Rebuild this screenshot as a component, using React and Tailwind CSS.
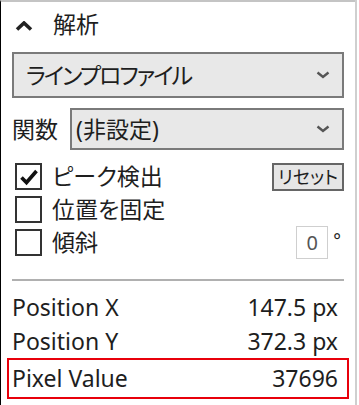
import React from "react";

function Chevron({ className }) {
  return (
    <svg width="14" height="8" viewBox="0 0 14 8" className={className}>
      <polyline points="1.5,1.5 7,6 12.5,1.5" fill="none" stroke="#555" strokeWidth="2.4" />
    </svg>
  );
}

function CheckRow({ checked, label, children }) {
  return (
    <div className="flex items-center h-[33px]">
      <span className="ml-[3px] w-[27px] h-[27px] border-2 border-[#333] bg-white flex items-center justify-center">
        {checked && (
          <svg width="20" height="18" viewBox="0 0 20 18">
            <polyline points="2.5,9.5 7.5,14.5 17.5,3" fill="none" stroke="#111" strokeWidth="3.6" />
          </svg>
        )}
      </span>
      <span className="ml-[10px] flex-1 leading-none">{label}</span>
      {children}
    </div>
  );
}

export default function App() {
  const rows = [
    { label: "Position X", value: "147.5 px", h: "h-[35px]" },
    { label: "Position Y", value: "372.3 px", h: "h-[33px]" },
  ];

  return (
    <div className="w-[359px] h-[405px] bg-white overflow-hidden flex text-[23px] text-[#1e1e1e] font-['Noto_Sans','Noto_Sans_CJK_JP',sans-serif] [font-feature-settings:'palt']">
      <div className="flex-1 border-t-2 border-[#c4c4c4] border-l border-l-black flex flex-col">
        {/* header */}
        <div className="h-[50px] flex items-center pl-[14px] pb-[5px]">
          <svg width="18" height="10" viewBox="0 0 18 10" className="mt-[2px]">
            <polyline points="2,8.5 9,2 16,8.5" fill="none" stroke="#222" strokeWidth="3.6" />
          </svg>
          <span className="ml-[20px] leading-none">解析</span>
        </div>

        <div className="px-[11px] flex flex-col">
          <div className="h-[46px] border-2 border-[#7a7a7a] bg-[#e8e8e8] flex items-center pl-[12px] pr-[12px]">
            <span className="flex-1 leading-none tracking-[-2px]">ラインプロファイル</span>
            <Chevron />
          </div>

          <div className="mt-[10px] flex items-center">
            <span className="w-[58px] leading-none">関数</span>
            <div className="flex-1 h-[42px] border-2 border-[#7a7a7a] bg-[#e8e8e8] flex items-center pl-[4px] pr-[12px]">
              <span className="flex-1 leading-none">(非設定)</span>
              <Chevron />
            </div>
          </div>

          <div className="mt-[10px] flex flex-col">
            <CheckRow checked label="ピーク検出">
              <button className="h-[28px] px-[4px] border-2 border-[#666] bg-[#e6e6e6] text-[18px] leading-none text-[#1e1e1e]">
                リセット
              </button>
            </CheckRow>
            <CheckRow label="位置を固定" />
            <CheckRow label="傾斜">
              <span className="w-[32px] h-[33px] border border-[#cfcfcf] flex items-center justify-center text-[20px] text-[#555]">
                0
              </span>
              <span className="ml-[5px] mr-[3px] text-[18px] leading-none -mt-[6px]">°</span>
            </CheckRow>
          </div>

          <div className="mt-[20px] border-t-2 border-[#b0b0b0]" />
        </div>

        <div className="mt-[9px] flex flex-col">
          {rows.map((r) => (
            <div key={r.label} className={`${r.h} mx-[6px] px-[5px] pr-[11px] flex items-center justify-between`}>
              <span>{r.label}</span>
              <span>{r.value}</span>
            </div>
          ))}
          <div className="h-[41px] mx-[6px] px-[3px] pr-[9px] border-2 border-[#e8000b] flex items-center justify-between">
            <span>Pixel Value</span>
            <span>37696</span>
          </div>
        </div>
      </div>
      <div className="w-[4px] border-l-2 border-[#cfcfcf] bg-white" />
    </div>
  );
}
